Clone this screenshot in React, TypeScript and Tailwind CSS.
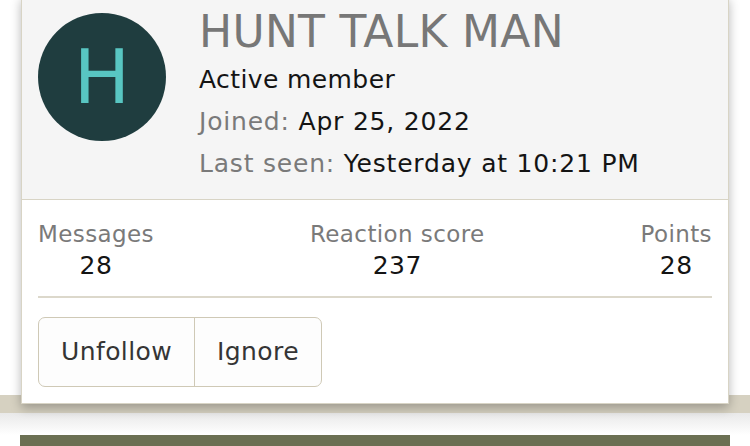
import React from "react";

const stats = [
  { label: "Messages", value: "28" },
  { label: "Reaction score", value: "237" },
  { label: "Points", value: "28" },
];

const MemberTooltip = () => {
  return (
    <div className="absolute left-[21px] top-[-4px] w-[708px] border border-[#d8d4c5] bg-white shadow-[0_4px_10px_rgba(0,0,0,0.28)]">
      <div className="flex gap-[33px] border-b border-[#d8d4c5] bg-[#f5f5f5] px-4 pt-4 pb-[14px]">
        <div className="flex h-[128px] w-[128px] shrink-0 items-center justify-center rounded-full bg-[#1f3d3f] text-[75px] leading-none text-[#58c6c2]">
          H
        </div>
        <div className="flex flex-col">
          <h1 className="text-[44px] leading-[38px] tracking-[0.3px] text-[#777777]">HUNT TALK MAN</h1>
          <div className="mt-2 flex flex-col text-[25px] leading-[42px] tracking-[0.8px] text-[#141414]">
            <span className="tracking-[0.4px]">Active member</span>
            <span>
              <span className="text-[#7a7a7a]">Joined:</span> Apr 25, 2022
            </span>
            <span>
              <span className="text-[#7a7a7a]">Last seen:</span> Yesterday at 10:21 PM
            </span>
          </div>
        </div>
      </div>
      <div className="px-4 pt-[19px] pb-4">
        <div className="flex justify-between border-b-2 border-[#dcd8cb] pb-[14px]">
          {stats.map((s) => (
            <div key={s.label} className="flex flex-col items-center">
              <span className="text-[23px] leading-[30px] tracking-[0.4px] text-[#7a7a7a]">{s.label}</span>
              <span className="text-[25px] leading-[33px] tracking-[0.5px] text-[#141414]">{s.value}</span>
            </div>
          ))}
        </div>
        <div className="mt-[19px] flex w-fit overflow-hidden rounded-[7px] border border-[#cfc9b6] bg-[#fdfdfd] text-[25px] tracking-[0.4px] text-[#353535]">
          <button className="h-[68px] border-r border-[#cfc9b6] px-[22px]">Unfollow</button>
          <button className="h-[68px] px-[22px]">Ignore</button>
        </div>
      </div>
    </div>
  );
};

export default function App() {
  return (
    <div className="relative h-[446px] w-full overflow-hidden bg-white font-['DejaVu_Sans',Verdana,sans-serif]">
      <div className="h-[395px]" />
      <div className="h-[18px] bg-[#d6d1c1]" />
      <div className="h-[22px] bg-gradient-to-b from-[#e9e9e9] to-white" />
      <div className="mx-[20px] h-[11px] bg-[#6b6f52]" />
      <MemberTooltip />
    </div>
  );
}
